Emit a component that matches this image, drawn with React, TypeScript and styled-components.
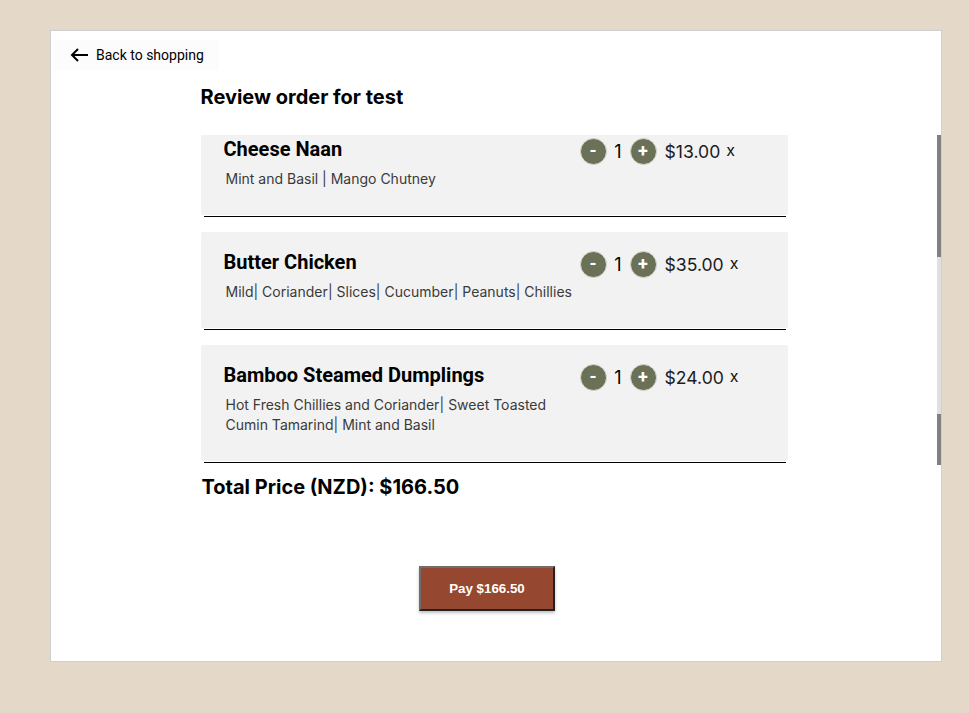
import React from "react";
import styled, { createGlobalStyle } from "styled-components";

const GlobalStyle = createGlobalStyle`
  html, body {
    margin: 0;
    padding: 0;
    background: #e4d9c8;
    font-family: Inter, "Noto Sans", sans-serif;
  }
  * {
    box-sizing: border-box;
  }
`;

const Page = styled.div`
  padding: 30px 27px 51px 50px;
`;

const Panel = styled.div`
  background: #ffffff;
  border: 1px solid #cfcfcf;
  height: 632px;
  display: flex;
  flex-direction: column;
`;

const BackBar = styled.div`
  padding: 9px 0 0 4px;
`;

const BackButton = styled.button`
  display: flex;
  align-items: center;
  gap: 7px;
  height: 30px;
  padding: 0 15px;
  border: none;
  background: #fcfcfc;
  font-family: Roboto, "Liberation Sans", sans-serif;
  font-size: 14px;
  color: #000;
  cursor: pointer;

  svg {
    width: 19px;
    height: 14px;
  }
`;

const Column = styled.div`
  width: 587px;
  margin: 0 auto;
  padding-right: 4px;
  box-sizing: content-box;
`;

const Title = styled.h2`
  margin: 15px 0 0;
  font-size: 20px;
  line-height: 24px;
  font-weight: 700;
  color: #000;
`;

const ScrollArea = styled.div`
  margin-top: 26px;
  height: 330px;
  display: flex;
  overflow: hidden;
`;

const ListViewport = styled.div`
  flex: 1;
  overflow: hidden;
`;

const ScrollTrack = styled.div`
  width: 4px;
  flex: none;
  background: #808080;
`;

const ScrollThumb = styled.div`
  margin-top: 122px;
  height: 157px;
  background: #e0e0e0;
`;

const List = styled.div`
  width: 587px;
  margin: 0 auto;
  display: flex;
  flex-direction: column;
  gap: 15px;
`;

const Item = styled.div``;

const Card = styled.div<{ $scrolled?: boolean }>`
  background: #f2f2f2;
  border-radius: ${(p) => (p.$scrolled ? "0 0 2px 2px" : "2px")};
  padding: ${(p) => (p.$scrolled ? "2px" : "18px")} 0 26px 23px;
  display: flex;
  align-items: flex-start;
`;

const Info = styled.div`
  width: 356px;
  flex: none;
`;

const Name = styled.div`
  font-family: Roboto, "Liberation Sans", sans-serif;
  font-size: 20px;
  line-height: 24px;
  font-weight: 700;
  color: #000;
`;

const Options = styled.div`
  margin-top: 8px;
  padding-left: 2px;
  font-size: 14px;
  line-height: 20px;
  color: #3a3a3a;
`;

const Controls = styled.div`
  display: flex;
  align-items: center;
  margin-top: 1px;
`;

const Round = styled.button`
  width: 27px;
  height: 27px;
  border-radius: 50%;
  border: 1px solid #d8d8d0;
  background: #6a7156;
  color: #fff;
  font-family: Roboto, "Liberation Sans", sans-serif;
  font-size: 18px;
  font-weight: 700;
  line-height: 1;
  padding: 0 0 2px;
  display: flex;
  align-items: center;
  justify-content: center;
`;

const Qty = styled.span`
  width: 23px;
  text-align: center;
  font-size: 18px;
  color: #000;
`;

const Price = styled.span`
  margin-left: 8px;
  font-size: 17.6px;
  color: #1c1c1c;
`;

const Remove = styled.span`
  margin-left: 6px;
  font-size: 16px;
  color: #111;
  position: relative;
  top: -2px;
`;

const Divider = styled.div`
  height: 1px;
  background: #000;
  margin: 1px 2px 0 3px;
`;

const Total = styled.div`
  margin: 10px 0 0 1px;
  font-size: 20px;
  line-height: 24px;
  font-weight: 700;
  color: #000;
`;

const PayRow = styled.div`
  display: flex;
  justify-content: center;
  padding-right: 14px;
  margin-top: 67px;
`;

const PayButton = styled.button`
  width: 136px;
  height: 45px;
  background: #96472f;
  color: #fff;
  font-family: "Liberation Sans", Arial, sans-serif;
  font-size: 13.33px;
  font-weight: 700;
  border: 2px solid;
  border-color: #6e6e6e #222 #222 #6e6e6e;
  box-shadow: 0 2px 3px rgba(0, 0, 0, 0.25);
  cursor: pointer;
`;

type Line = { name: string; options: string; price: string };

// the list is scrolled: the first visible card has its top edge hidden
const items: Line[] = [
  { name: "Cheese Naan", options: "Mint and Basil | Mango Chutney", price: "$13.00" },
  {
    name: "Butter Chicken",
    options: "Mild| Coriander| Slices| Cucumber| Peanuts| Chillies",
    price: "$35.00",
  },
  {
    name: "Bamboo Steamed Dumplings",
    options: "Hot Fresh Chillies and Coriander| Sweet Toasted Cumin Tamarind| Mint and Basil",
    price: "$24.00",
  },
];

const BackArrow = () => (
  <svg viewBox="0 0 19 14" fill="none" stroke="#000" strokeWidth="2">
    <path d="M18 7H2M8 1L2 7l6 6" />
  </svg>
);

const App = () => {
  return (
    <>
      <GlobalStyle />
      <Page>
        <Panel>
          <BackBar>
            <BackButton>
              <BackArrow />
              Back to shopping
            </BackButton>
          </BackBar>
          <Column>
            <Title>Review order for test</Title>
          </Column>
          <ScrollArea>
            <ListViewport>
              <List>
                {items.map((it, i) => (
                  <Item key={it.name}>
                    <Card $scrolled={i === 0}>
                      <Info>
                        <Name>{it.name}</Name>
                        <Options>{it.options}</Options>
                      </Info>
                      <Controls>
                        <Round>-</Round>
                        <Qty>1</Qty>
                        <Round>+</Round>
                        <Price>{it.price}</Price>
                        <Remove>x</Remove>
                      </Controls>
                    </Card>
                    <Divider />
                  </Item>
                ))}
              </List>
            </ListViewport>
            <ScrollTrack>
              <ScrollThumb />
            </ScrollTrack>
          </ScrollArea>
          <Column>
            <Total>Total Price (NZD): $166.50</Total>
            <PayRow>
              <PayButton>Pay $166.50</PayButton>
            </PayRow>
          </Column>
        </Panel>
      </Page>
    </>
  );
};

export default App;
